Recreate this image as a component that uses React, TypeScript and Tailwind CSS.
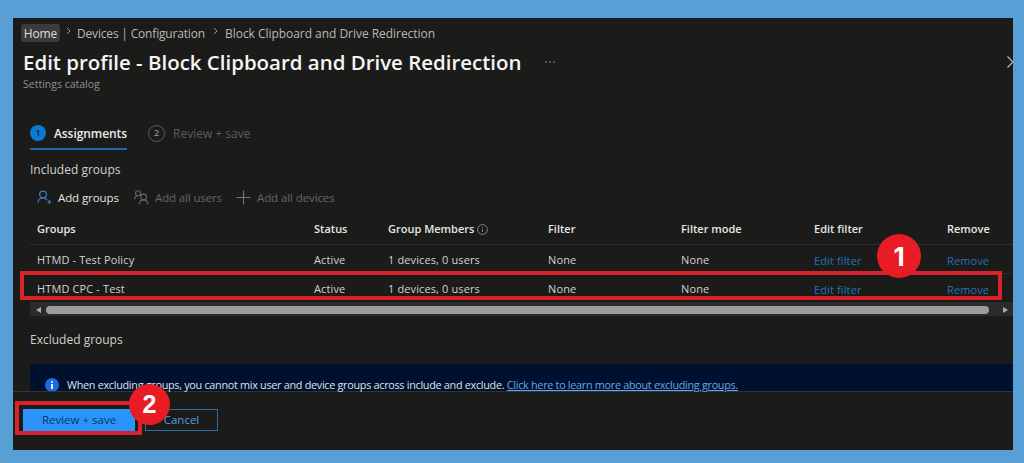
import React from 'react';

const rows = [
  { name: 'HTMD - Test Policy', status: 'Active', members: '1 devices, 0 users', filter: 'None', mode: 'None' },
  { name: 'HTMD CPC - Test', status: 'Active', members: '1 devices, 0 users', filter: 'None', mode: 'None' },
];

const columns = 'grid grid-cols-[277px_74px_160px_133px_133px_133px_66px] items-center pl-[7px] whitespace-nowrap';

function Chevron() {
  return (
    <svg width="5" height="8" viewBox="0 0 5 8" fill="none" stroke="#a0a0a0" strokeWidth="0.9">
      <path d="M1 1l3 3-3 3" />
    </svg>
  );
}

function Breadcrumb() {
  return (
    <div className="flex h-[18px] items-center pl-2 text-[12px] text-[#b8b8b8] whitespace-nowrap">
      <div className="flex h-[18px] w-[39px] items-center justify-center rounded-[3px] bg-[#3b3b3b] text-[#dedede]">
        <span className="pt-px tracking-[-0.13px]">Home</span>
      </div>
      <div className="flex w-[17px] justify-center pb-1"><Chevron /></div>
      <span className="w-[128px] pt-px tracking-[-0.18px]">Devices | Configuration</span>
      <div className="flex w-[20px] justify-center pb-1"><Chevron /></div>
      <span className="pt-px tracking-[-0.04px]">Block Clipboard and Drive Redirection</span>
    </div>
  );
}

function Header() {
  return (
    <div className="pl-[10px]">
      <div className="flex h-[32px] items-center justify-between">
        <div className="flex items-center">
          <h1 className="w-[521px] text-[20.45px] font-semibold text-[#f5f5f5] whitespace-nowrap">
            Edit profile - Block Clipboard and Drive Redirection
          </h1>
          <svg width="12" height="4" viewBox="0 0 12 4" fill="#a0a0a0">
            <circle cx="2" cy="2" r="0.8" />
            <circle cx="6" cy="2" r="0.8" />
            <circle cx="10" cy="2" r="0.8" />
          </svg>
        </div>
        <svg width="6" height="12" viewBox="0 0 6 12" fill="none" stroke="#c4c4c4" strokeWidth="1.1">
          <path d="M0.5 0.5L6 6L0.5 11.5" />
        </svg>
      </div>
      <div className="-mt-px h-[14px] text-[10.5px] leading-[14px] text-[#8f8f8f]">Settings catalog</div>
    </div>
  );
}

function Steps() {
  return (
    <div className="mt-[32px] flex h-[27px] gap-[18px] pl-[17px] text-[12px]">
      <div className="flex w-[97px] items-center border-b-2 border-[#1c66a5] pb-[5px] font-semibold text-[#ececec]">
        <div className="mr-2 flex h-4 w-4 shrink-0 items-center justify-center rounded-full bg-[#0a78d4] text-[9px] text-[#0b2b48]">1</div>
        <span className="pt-[2px] tracking-[-0.08px] whitespace-nowrap">Assignments</span>
      </div>
      <div className="flex items-center pb-[7px] pl-[3px] text-[#5c5c5c]">
        <div className="mr-2 flex h-[17px] w-[17px] items-center justify-center rounded-full border border-[#5c5c5c] text-[9px] font-semibold text-[#8a8a8a]">2</div>
        <span className="pt-[2px] whitespace-nowrap">Review + save</span>
      </div>
    </div>
  );
}

function Toolbar() {
  return (
    <div className="flex h-[24px] items-center pl-[24px] text-[11.5px] text-[#666666] whitespace-nowrap">
      <svg className="mr-[6px] mb-[2px]" width="15" height="15" viewBox="0 0 15 15" fill="none" stroke="#3483c8" strokeWidth="1.2">
        <circle cx="6" cy="4.5" r="3.4" />
        <path d="M0.8 12.5C1.4 9.6 3.4 8 6 8c1.8 0 3.2.7 4.2 2M12.3 10v4M10.3 12h4" />
      </svg>
      <span className="w-[76px] tracking-[-0.1px] text-[#e4e4e4]">Add groups</span>
      <svg className="mr-[6px] mb-[2px]" width="15" height="15" viewBox="0 0 15 15" fill="none" stroke="#666666" strokeWidth="1.1">
        <circle cx="4" cy="3.2" r="2.5" />
        <path d="M0.6 9.5C0.8 7.3 2 5.8 4 5.8" />
        <circle cx="9.6" cy="7" r="2.9" />
        <path d="M5.3 14.3c.2-2.7 1.9-4.4 4.3-4.4s4.1 1.7 4.4 4.4" />
      </svg>
      <span className="w-[81px] tracking-[-0.14px]">Add all users</span>
      <svg className="mr-[6px] mb-[2px]" width="15" height="15" viewBox="0 0 15 15" stroke="#777777" strokeWidth="1.1">
        <path d="M7.5 0.5v14M0.5 7.5h14" />
      </svg>
      <span className="tracking-[-0.1px]">Add all devices</span>
    </div>
  );
}

function GroupsTable() {
  return (
    <div className="ml-[17px] text-[11px] text-[#d2d2d2]">
      <div className={`${columns} h-[35px] border-b border-[#2e2e2e] pt-[4px] font-semibold text-[#e6e6e6]`}>
        <span>Groups</span>
        <span>Status</span>
        <span className="flex items-center gap-[3px]">
          Group Members
          <svg width="11" height="11" viewBox="0 0 11 11" fill="none" stroke="#8c8c8c" strokeWidth="0.9">
            <circle cx="5.5" cy="5.5" r="4.9" />
            <path d="M5.5 5v3M5.5 3v1" />
          </svg>
        </span>
        <span>Filter</span>
        <span>Filter mode</span>
        <span>Edit filter</span>
        <span>Remove</span>
      </div>
      {rows.map((row) => (
        <div key={row.name} className={`${columns} h-[29px] border-b border-[#2a2a2a] pt-[2px] tracking-[0.12px]`}>
          <span>{row.name}</span>
          <span>{row.status}</span>
          <span>{row.members}</span>
          <span>{row.filter}</span>
          <span>{row.mode}</span>
          <a className="pt-[2px] text-[#2572b8]">Edit filter</a>
          <a className="pt-[2px] text-[#2572b8]">Remove</a>
        </div>
      ))}
      <div className="flex h-[13px] items-center bg-[#2b2b2b] pl-[6px]">
        <svg width="5" height="6" viewBox="0 0 5 6" fill="#a8a8a8"><path d="M5 0v6L0 3z" /></svg>
        <div className="ml-[5px] h-[8px] w-[943px] rounded-full bg-[#9d9d9c]" />
        <svg className="ml-[14px]" width="5" height="6" viewBox="0 0 5 6" fill="#a8a8a8"><path d="M0 0v6l5-3z" /></svg>
      </div>
    </div>
  );
}

function ExcludedNotice() {
  return (
    <div className="ml-[17px] flex h-[27px] items-start bg-[#00112f] pl-[15px] pt-[13px] text-[10.8px] text-[#dfe3ea] whitespace-nowrap">
      <svg className="mt-px mr-2 shrink-0" width="14" height="13" viewBox="0 0 14 13">
        <circle cx="7" cy="7" r="7" fill="#1a6ce0" />
        <path d="M7 6v5M7 3v1.7" stroke="#ffffff" strokeWidth="1.8" />
      </svg>
      <span className="h-[14px] leading-[15px] tracking-[-0.28px]">
        When excluding groups, you cannot mix user and device groups across include and exclude.{' '}
        <a className="text-[#62a8ea] underline decoration-1 underline-offset-1">Click here to learn more about excluding groups.</a>
      </span>
    </div>
  );
}

function Footer() {
  return (
    <div className="flex h-[60px] items-start gap-[10px] border-t border-[#333333] pl-[10px] pt-[17px] text-[11.5px] whitespace-nowrap">
      <button className="h-[22px] w-[112px] bg-[#2a94fa] text-[#0d365f]">Review + save</button>
      <button className="h-[22px] w-[73px] border border-[#2c6ea6] text-[#4d9fe8]">Cancel</button>
    </div>
  );
}

export default function App() {
  return (
    <div className="relative h-[463px] w-[1024px] overflow-hidden bg-[#579fd4] pl-[13px] pt-[18px] font-['Open_Sans','Noto_Sans',sans-serif]">
      <div className="h-[432px] w-[1000px] overflow-hidden bg-[#1b1b19] pt-[6px]">
        <Breadcrumb />
        <div className="mt-[4px]"><Header /></div>
        <Steps />
        <h2 className="mt-[10px] h-[20px] pl-[17px] text-[12px] leading-[20px] text-[#d0d0d0]">Included groups</h2>
        <div className="mt-[6px]"><Toolbar /></div>
        <GroupsTable />
        <h2 className="mt-[14px] h-[20px] pl-[17px] text-[12px] leading-[20px] text-[#d0d0d0]">Excluded groups</h2>
        <div className="mt-[14px]"><ExcludedNotice /></div>
        <Footer />
      </div>

      {/* step callouts */}
      <div className="absolute left-[20px] top-[271px] h-[29px] w-[982px] border-4 border-[#d8232a]" />
      <div className="absolute left-[15px] top-[401px] h-[34px] w-[127px] border-4 border-[#d8232a]" />
      <div className="absolute left-[877px] top-[234px] flex h-11 w-11 items-center justify-center rounded-full bg-[#e81c24] font-['Inter',sans-serif] text-[26px] font-bold text-white">1</div>
      <div className="absolute left-[129px] top-[384px] flex h-[41px] w-[41px] items-center justify-center rounded-full bg-[#e81c24] font-['Liberation_Sans',sans-serif] text-[25px] font-bold text-white">2</div>
    </div>
  );
}
